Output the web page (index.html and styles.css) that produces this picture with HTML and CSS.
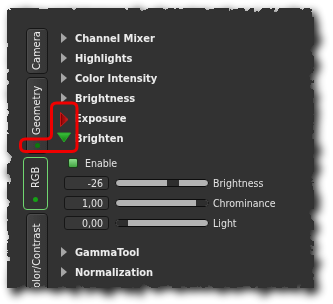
FILE: index.html
```html
<!DOCTYPE html>
<html lang="en">
<head>
    <meta charset="UTF-8">
    <title>RGB settings</title>
    <link rel="stylesheet" href="styles.css">
</head>
<body>
    <div class="panel">
        <div class="tabs">
            <div class="tab tab-camera"><span class="tab-label">Camera</span></div>
            <div class="tab tab-geometry"><span class="tab-label">Geometry</span><span class="dot"></span></div>
            <div class="tab tab-rgb active"><span class="tab-label">RGB</span><span class="dot dot-on"></span></div>
            <div class="tab tab-color"><span class="tab-label">Color/Contrast</span></div>
        </div>

        <div class="tree">
            <div class="node"><svg class="arrow" viewBox="0 0 18 20"><polygon points="4,5 10,10 4,15"/></svg>Channel Mixer</div>
            <div class="node"><svg class="arrow" viewBox="0 0 18 20"><polygon points="4,5 10,10 4,15"/></svg>Highlights</div>
            <div class="node"><svg class="arrow" viewBox="0 0 18 20"><polygon points="4,5 10,10 4,15"/></svg>Color Intensity</div>
            <div class="node"><svg class="arrow" viewBox="0 0 18 20"><polygon points="4,5 10,10 4,15"/></svg>Brightness</div>
            <div class="node">
                <svg class="arrow" viewBox="0 0 18 20">
                    <defs>
                        <linearGradient id="redfill" x1="0" x2="1" y1="0" y2="0">
                            <stop offset="0" stop-color="#7a0000"/>
                            <stop offset="1" stop-color="#d42020"/>
                        </linearGradient>
                    </defs>
                    <polygon points="3.5,4.5 11,11.5 3.5,18.5" fill="url(#redfill)" stroke="#c81818" stroke-width="1"/>
                </svg>Exposure
            </div>
            <div class="node">
                <svg class="arrow" viewBox="0 0 18 20">
                    <defs>
                        <linearGradient id="greenfill" x1="0" x2="0" y1="0" y2="1">
                            <stop offset="0" stop-color="#3cc23c"/>
                            <stop offset="1" stop-color="#0d7a0d"/>
                        </linearGradient>
                    </defs>
                    <polygon points="0.5,5 13.5,5 7,14" fill="url(#greenfill)" stroke="#2aa82a" stroke-width="1"/>
                </svg>Brighten
            </div>

            <div class="group">
                <div class="check-row"><span class="check"></span>Enable</div>
                <div class="param">
                    <span class="spin">-26</span>
                    <span class="slider"><span class="handle" style="margin-left:51px"></span></span>
                    <span class="param-name">Brightness</span>
                </div>
                <div class="param">
                    <span class="spin">1,00</span>
                    <span class="slider"><span class="handle" style="margin-left:80px"></span></span>
                    <span class="param-name">Chrominance</span>
                </div>
                <div class="param">
                    <span class="spin">0,00</span>
                    <span class="slider"><span class="handle" style="margin-left:0px"></span></span>
                    <span class="param-name">Light</span>
                </div>
            </div>

            <div class="node"><svg class="arrow" viewBox="0 0 18 20"><polygon points="4,5 10,10 4,15"/></svg>GammaTool</div>
            <div class="node"><svg class="arrow" viewBox="0 0 18 20"><polygon points="4,5 10,10 4,15"/></svg>Normalization</div>
        </div>
    </div>

    <!-- red callout drawn over the screenshot -->
    <svg class="markup" width="333" height="304" viewBox="0 0 333 304">
        <path d="M51.5,108 Q51.5,103 56.5,103 L72,103 Q77,103 77,108 L77,146.5 Q77,151.5 72,151.5 L25.5,151.5 Q20.5,151.5 20.5,146.5 L20.5,144 Q20.5,139 25.5,139 L46.5,139 Q51.5,139 51.5,134 Z"/>
    </svg>

    <svg class="defs" width="0" height="0">
        <filter id="torn" x="-6%" y="-6%" width="114%" height="114%">
            <feTurbulence type="fractalNoise" baseFrequency="0.09" numOctaves="3" seed="7" result="noise"/>
            <feDisplacementMap in="SourceAlpha" in2="noise" scale="16" xChannelSelector="R" yChannelSelector="G" result="edge"/>
            <feComposite in="SourceGraphic" in2="edge" operator="in" result="cut"/>
            <feGaussianBlur in="edge" stdDeviation="4" result="blur"/>
            <feOffset in="blur" dx="4" dy="4" result="drop"/>
            <feComponentTransfer in="drop" result="shadow">
                <feFuncA type="linear" slope="0.85"/>
            </feComponentTransfer>
            <feMerge>
                <feMergeNode in="shadow"/>
                <feMergeNode in="cut"/>
            </feMerge>
        </filter>
    </svg>
</body>
</html>
```

FILE: styles.css
```css
html, body {
    margin: 0;
    height: 100%;
    overflow: hidden;
}

body {
    background: #ffffff;
    font-family: "DejaVu Sans Condensed", "Liberation Sans", sans-serif;
    color: #e6e6e6;
    position: relative;
}

.panel {
    margin: 8px 0 0 7px;
    width: 307px;
    height: 280px;
    box-sizing: border-box;
    padding: 20px 0 0 16px;
    background: #333333;
    display: flex;
    gap: 9px;
    overflow: hidden;
    filter: url(#torn);
}

/* vertical tabs */
.tabs {
    width: 25px;
    display: flex;
    flex-direction: column;
    align-items: flex-end;
    gap: 3px;
    flex-shrink: 0;
}

.tab {
    width: 22px;
    box-sizing: border-box;
    border: 1px solid #181818;
    border-radius: 4px;
    background: linear-gradient(to right, #444444, #3a3a3a 60%, #363636);
    box-shadow: inset 1px 1px 0 #4c4c4c;
    display: flex;
    flex-direction: column;
    align-items: center;
    flex-shrink: 0;
}

.tab-camera { height: 46px; }
.tab-geometry { height: 77px; }
.tab-rgb { height: 53px; }
.tab-color { height: 92px; }

.tab.active {
    width: 25px;
    border-color: #6fd66f;
    background: #323232;
    box-shadow: none;
}

.tab-label {
    flex: 1;
    writing-mode: vertical-rl;
    transform: rotate(180deg);
    text-align: center;
    font-size: 11px;
    line-height: 20px;
    color: #ececec;
}

.dot {
    width: 5px;
    height: 5px;
    border-radius: 50%;
    background: #0b7a0b;
    margin-bottom: 5px;
}

.dot-on {
    background: #14a014;
    margin-bottom: 7px;
}

/* tree */
.tree {
    display: flex;
    flex-direction: column;
    width: 240px;
}

.node {
    height: 20px;
    display: flex;
    align-items: center;
    font-weight: bold;
    font-size: 11px;
    color: #ececec;
}

.arrow {
    width: 18px;
    height: 20px;
    flex-shrink: 0;
    fill: #a6a6a6;
}

.group {
    padding: 4px 0 9px 0;
    font-size: 10.5px;
    color: #e2e2e2;
}

.check-row {
    height: 21px;
    display: flex;
    align-items: center;
}

.check {
    width: 10px;
    height: 10px;
    box-sizing: border-box;
    margin: 0 7px 0 11px;
    border: 1px solid #1c3a1c;
    border-radius: 2px;
    background: linear-gradient(#8ede8e, #42a442);
}

.param {
    height: 20px;
    display: flex;
    align-items: center;
}

.spin {
    width: 45px;
    height: 14px;
    box-sizing: border-box;
    margin-left: 7px;
    padding-right: 5px;
    border: 1px solid #171717;
    border-radius: 3px;
    background: #393939;
    text-align: right;
    line-height: 12px;
}

.slider {
    width: 94px;
    height: 8px;
    box-sizing: border-box;
    margin-left: 6px;
    border: 1px solid #111111;
    border-radius: 4px;
    background: #b3b3b3;
    overflow: hidden;
    display: flex;
}

.handle {
    width: 12px;
    height: 100%;
    background: #2e2e2e;
}

.param-name {
    margin-left: 4px;
}

/* callout */
.markup {
    position: absolute;
    left: 0;
    top: 0;
    pointer-events: none;
    fill: none;
    stroke: #f00000;
    stroke-width: 3;
    stroke-linejoin: round;
}

.defs {
    position: absolute;
    width: 0;
    height: 0;
}
```
